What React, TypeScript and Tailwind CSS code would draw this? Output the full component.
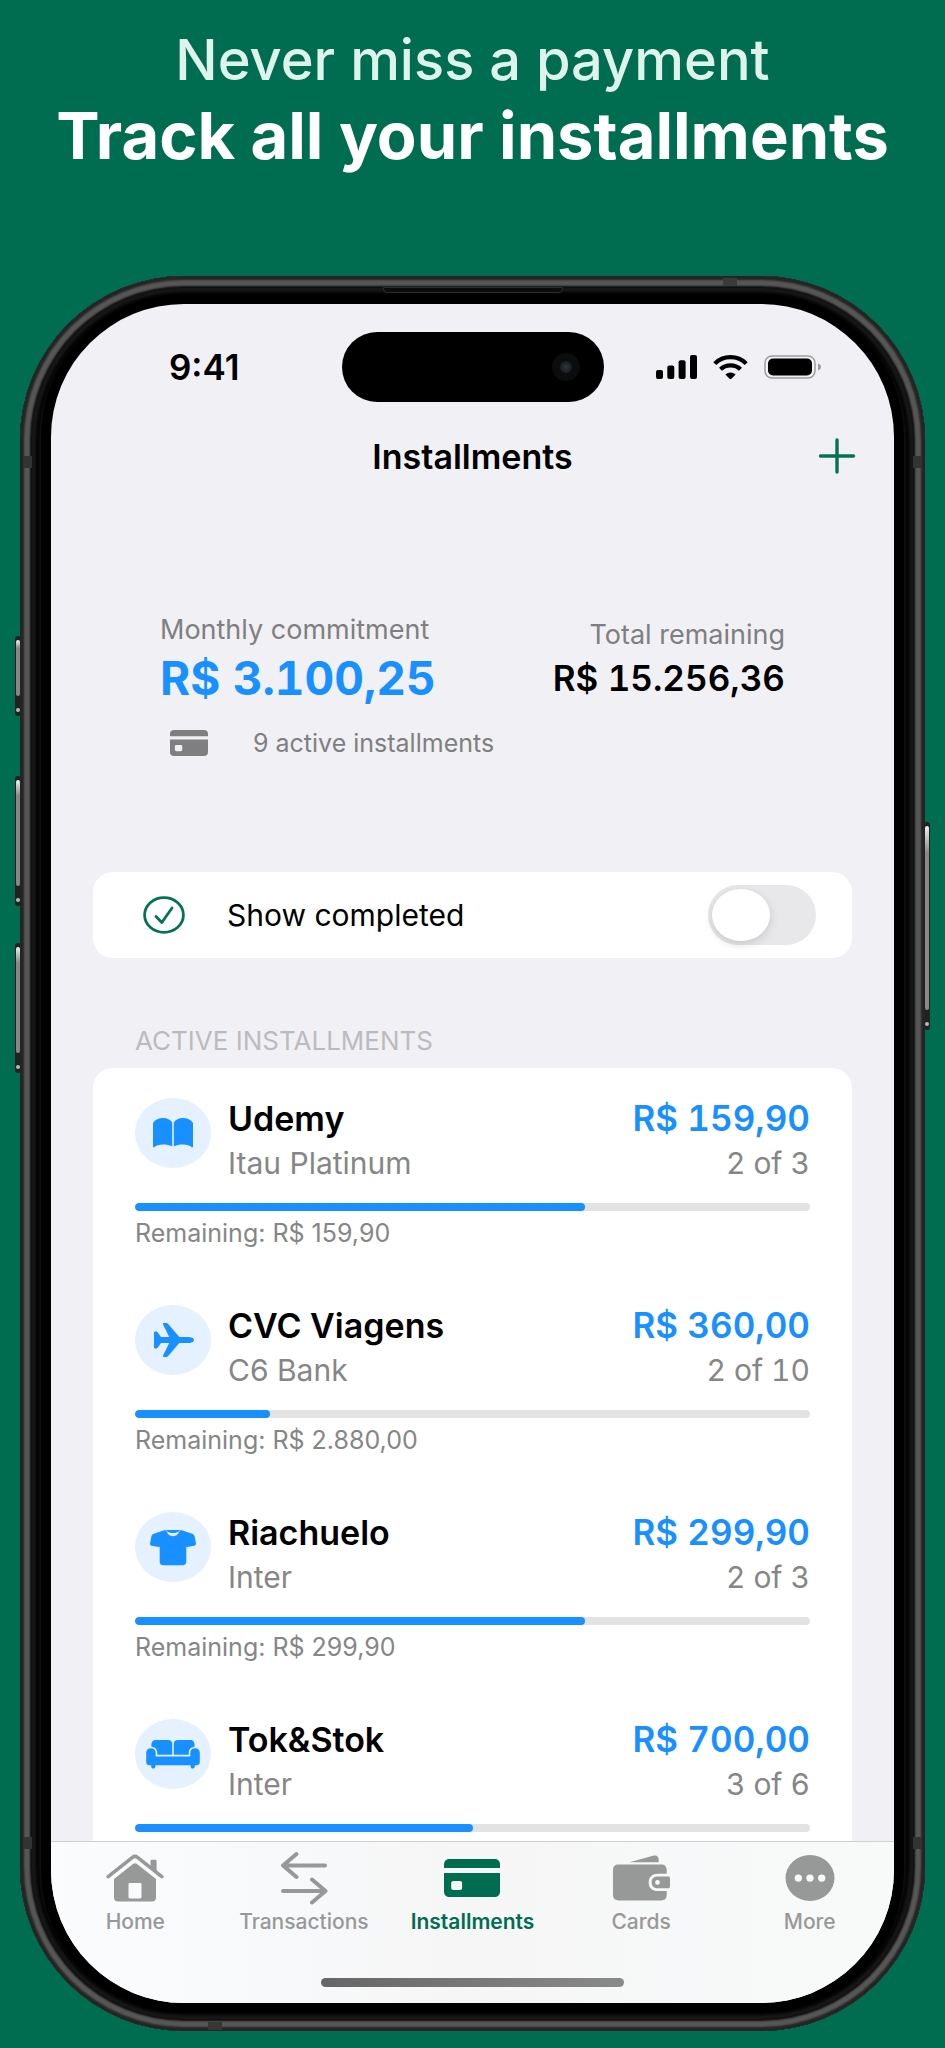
import { useState } from "react";
import type { ReactNode } from "react";

function BookIcon() {
  return (
    <svg viewBox="0 0 42 32" className="h-8 w-[42px]" fill="currentColor" aria-hidden="true">
      <path d="M1 6C3 2.600 7 1 11 1s7.500 1.600 9.200 4.400V29.600C17.800 28.200 14.500 27.600 11 27.600S4 28.800 2.200 30.200C1.600 30.700 1 30.400 1 29.600Z" />
      <path d="M41 6C39 2.600 35 1 31 1s-7.500 1.600-9.200 4.400V29.600C24.200 28.200 27.500 27.600 31 27.600S38 28.800 39.800 30.200C40.400 30.700 41 30.400 41 29.600Z" />
    </svg>
  );
}

function PlaneIcon() {
  return (
    <svg viewBox="0 0 40 34" className="ml-0.5 h-[34px] w-10" fill="currentColor" aria-hidden="true">
      <path d="M40 17c0 1.900-2.600 3.100-6.500 3.100h-8.200L14.200 32.900c-.6.700-1.200 1-2.100 1H9.900c-.8 0-1.200-.6-.8-1.300L15.200 20.100H7l-3.400 4.700c-.4.500-.8.700-1.400.7H.9c-.6 0-.9-.3-.9-.9V9.400c0-.6.3-.9.900-.9h1.300c.6 0 1 .2 1.400.7L7 13.900h8.200L9.100 1.400C8.700.7 9.100.1 9.900.1h2.200c.9 0 1.500.3 2.100 1l11.100 12.800h8.200c3.900 0 6.500 1.200 6.500 3.100Z" />
    </svg>
  );
}

function ShirtIcon() {
  return (
    <svg viewBox="0 0 46 37" className="h-[37px] w-[46px]" fill="currentColor" aria-hidden="true">
      <path d="M15 1 4.500 4.400C2.600 5 1.600 6 1.200 8L.1 14.200c-.2 1.300.4 2.200 1.600 2.500L8.800 18c.6.100.9-.2.900-.7V32.500C9.700 35 11 36.300 13.500 36.300h19c2.500 0 3.800-1.300 3.800-3.800V17.300c0 .5.300.8.900.7l7.100-1.300c1.200-.3 1.800-1.200 1.600-2.500L44.800 8c-.4-2-1.400-3-3.300-3.600L31 1c-1 .9-1.600 1.500-2.200 2.600C27.700 5.900 26 7.200 23 7.200s-4.700-1.300-5.800-3.600C16.600 2.500 16 1.900 15 1Z" />
      <path d="M15.400.9h15.200l-2.300 1.900c-1.500.9-3.200 1.300-5.300 1.300s-3.800-.4-5.300-1.300Z" />
    </svg>
  );
}

function SofaIcon() {
  return (
    <svg viewBox="0 0 54 30" className="h-[30px] w-[54px]" fill="currentColor" aria-hidden="true">
      <path d="M9.500 1H22c2.800 0 4.200 1.400 4.200 4v10.700H11.300V14c0-3.300-1.700-5.600-6-6.500C5.300 3.300 6.500 1 9.500 1Z" />
      <path d="M44.500 1H32c-2.800 0-4.200 1.400-4.200 4v10.700h14.900V14c0-3.300 1.700-5.600 6-6.500C48.700 3.300 47.500 1 44.500 1Z" />
      <path d="M5 9.200c2.900 0 4.700 1.800 4.700 4.700v3.500h34.600v-3.500c0-2.900 1.800-4.700 4.700-4.700s4.800 1.900 4.800 4.900V23c0 2.200-1.100 3.300-3.300 3.300H49l-.4 2c-.2.900-.8 1.300-1.900 1.300s-1.700-.4-1.900-1.300l-.4-2H9.600l-.4 2c-.2.900-.8 1.300-1.900 1.300s-1.700-.4-1.900-1.300l-.4-2H3.500C1.300 26.300.2 25.200.2 23v-8.900c0-3 1.900-4.900 4.800-4.900Z" />
    </svg>
  );
}

function HomeIcon() {
  return (
    <svg viewBox="0 0 58 48" className="h-12 w-[58px]" aria-hidden="true">
      <path
        d="M2.200 22.600 26.500 3.300c1.800-1.400 3.200-1.400 5 0L55.800 22.600"
        fill="none"
        stroke="currentColor"
        strokeWidth="3.600"
        strokeLinecap="round"
      />
      <path d="M44.500 7.500c0-1.200.6-1.800 1.800-1.800h2.500c1.200 0 1.800.6 1.800 1.800v9.700l-6.100-4.900Z" fill="currentColor" />
      <path
        fillRule="evenodd"
        d="M27.300 9.800c1.200-.9 2.200-.9 3.400 0L50 25v18.500c0 2.700-1.400 4-4.200 4H12.200c-2.800 0-4.200-1.300-4.200-4V25ZM24 29c-1 0-1.500.5-1.500 1.400V43c0 .9.500 1.400 1.500 1.400h10c1 0 1.500-.5 1.500-1.400V30.400c0-.9-.5-1.400-1.500-1.400Z"
        fill="currentColor"
      />
    </svg>
  );
}

function TransactionsIcon() {
  return (
    <svg
      viewBox="0 0 48 54"
      className="h-[54px] w-12"
      fill="none"
      stroke="currentColor"
      strokeWidth="4"
      strokeLinecap="round"
      strokeLinejoin="round"
      aria-hidden="true"
    >
      <path d="M45 14.500H3.500M16.500 3 3 14.500 16.500 26M3 40h41.500M32 28.500 45.500 40 32 51.500" />
    </svg>
  );
}

function CardIcon({ className }: { className: string }) {
  return (
    <svg viewBox="0 0 56 38" preserveAspectRatio="none" className={className} fill="currentColor" aria-hidden="true">
      <path d="M6 0h44c4 0 6 2 6 5.500V9H0V5.500C0 2 2 0 6 0Z" />
      <path
        fillRule="evenodd"
        d="M0 14h56v18.500c0 3.500-2 5.500-6 5.500H6c-4 0-6-2-6-5.500ZM9.500 22C8 22 7.200 22.800 7.200 24v5c0 1.300.8 2 2.300 2h6.300c1.500 0 2.300-.7 2.300-2v-5c0-1.200-.8-2-2.300-2Z"
      />
    </svg>
  );
}

function WalletIcon() {
  return (
    <svg viewBox="0 0 57 46" className="h-[46px] w-[57px]" fill="currentColor" aria-hidden="true">
      <path d="M16.500 7.200 40 .8c3.600-1 5.500.5 5.700 4.200v2.200Z" />
      <path d="M5.500 9.400H48c3.800 0 5.700 2 5.700 5.600v3.700H45c-5.800 0-9.300 3.200-9.300 8.700s3.500 8.600 9.300 8.600h8.700v3.800c0 3.700-1.900 5.700-5.700 5.700H6c-3.900 0-6-2-6-5.700V15c0-3.700 1.900-5.600 5.500-5.600Z" />
      <path
        fillRule="evenodd"
        d="M45.300 21.600H55c1.400 0 2 .6 2 1.800v8c0 1.200-.6 1.800-2 1.800h-9.700c-4.300 0-6.700-2-6.700-5.800s2.400-5.800 6.700-5.800Zm-.8 3.500a2.400 2.300 0 1 0 0 4.600 2.400 2.300 0 1 0 0-4.600Z"
      />
    </svg>
  );
}

function MoreIcon() {
  return (
    <svg viewBox="0 0 50 46" className="h-[46px] w-[50px]" fill="currentColor" aria-hidden="true">
      <path
        fillRule="evenodd"
        d="M25 0a24.500 23 0 1 0 0 46 24.500 23 0 1 0 0-46ZM13.300 19.500a3.700 3.600 0 1 1 0 7.200 3.700 3.600 0 1 1 0-7.200Zm11.700 0a3.700 3.600 0 1 1 0 7.200 3.700 3.600 0 1 1 0-7.200Zm11.700 0a3.700 3.600 0 1 1 0 7.200 3.700 3.600 0 1 1 0-7.200Z"
      />
    </svg>
  );
}

function StatusIcons() {
  return (
    <div className="flex items-center gap-4 text-black">
      <svg viewBox="0 0 41 24" className="h-6 w-[41px]" fill="currentColor" aria-hidden="true">
        <rect x="0" y="15" width="7" height="9" rx="2" />
        <rect x="11.300" y="10.500" width="7" height="13.500" rx="2" />
        <rect x="22.600" y="5.300" width="7" height="18.700" rx="2" />
        <rect x="34" y="0" width="7" height="24" rx="2" />
      </svg>
      <svg viewBox="0 0 35 24" className="h-6 w-[35px]" fill="none" stroke="currentColor" strokeWidth="4.200" aria-hidden="true">
        <path d="M1.800 8.600C6 4.300 11.400 2.200 17.500 2.200S29 4.300 33.200 8.600" />
        <path d="M7.500 14.300c2.700-2.700 6.100-4 10-4s7.300 1.300 10 4" />
        <path d="M17.500 24c-.4 0-.8-.2-1.200-.6l-3.900-4c1.400-1.300 3.100-2 5.100-2s3.700.7 5.100 2l-3.900 4c-.4.400-.8.600-1.200.6Z" fill="currentColor" stroke="none" />
      </svg>
      <svg viewBox="0 0 58 24" className="h-6 w-[58px]" aria-hidden="true">
        <rect x="1" y="1" width="50" height="22" rx="7" fill="none" stroke="#9d9da0" strokeWidth="1.500" />
        <rect x="4" y="3.500" width="44" height="17" rx="5" fill="currentColor" />
        <path d="M54 8.500c2 .7 3 1.900 3 3.500s-1 2.800-3 3.500Z" fill="#9d9da0" />
      </svg>
    </div>
  );
}

type Installment = {
  name: string;
  account: string;
  amount: string;
  paid: number;
  total: number;
  remaining?: string;
  icon: ReactNode;
};

const installments: Installment[] = [
  { name: "Udemy", account: "Itau Platinum", amount: "R$ 159,90", paid: 2, total: 3, remaining: "R$ 159,90", icon: <BookIcon /> },
  { name: "CVC Viagens", account: "C6 Bank", amount: "R$ 360,00", paid: 2, total: 10, remaining: "R$ 2.880,00", icon: <PlaneIcon /> },
  { name: "Riachuelo", account: "Inter", amount: "R$ 299,90", paid: 2, total: 3, remaining: "R$ 299,90", icon: <ShirtIcon /> },
  { name: "Tok&Stok", account: "Inter", amount: "R$ 700,00", paid: 3, total: 6, icon: <SofaIcon /> },
];

function InstallmentRow({ item }: { item: Installment }) {
  return (
    <li className="flex flex-col">
      <div className="flex items-start">
        <div className="mt-0.5 flex h-[70px] w-[76px] shrink-0 items-center justify-center rounded-[50%] bg-[#e5f1fe] text-[#1990ff]">
          {item.icon}
        </div>
        <div className="ml-[17px] min-w-0 flex-1 leading-[45px]">
          <h3 className="text-[34px] font-semibold text-black">{item.name}</h3>
          <p className="text-[30px] text-[#868686]">{item.account}</p>
        </div>
        <div className="text-right leading-[45px] tabular-nums">
          <p className="text-[35px] font-semibold text-[#1990ff]">{item.amount}</p>
          <p className="text-[30px] text-[#868686]">
            {item.paid} of {item.total}
          </p>
        </div>
      </div>
      <div
        role="progressbar"
        aria-label={item.name}
        aria-valuenow={item.paid}
        aria-valuemax={item.total}
        className="mt-[17px] h-2 overflow-hidden rounded-full bg-[#e3e3e4]"
      >
        <div className="h-full rounded-full bg-[#1990ff]" style={{ width: `${(item.paid / item.total) * 100}%` }} />
      </div>
      {item.remaining && <p className="mt-1.5 mb-[54px] text-[25px] leading-8 text-[#868686]">Remaining: {item.remaining}</p>}
    </li>
  );
}

const tabs: { label: string; icon: ReactNode }[] = [
  { label: "Home", icon: <HomeIcon /> },
  { label: "Transactions", icon: <TransactionsIcon /> },
  { label: "Installments", icon: <CardIcon className="h-[38px] w-14" /> },
  { label: "Cards", icon: <WalletIcon /> },
  { label: "More", icon: <MoreIcon /> },
];

function SideButton({ className }: { className: string }) {
  return (
    <div className={`absolute flex w-1.5 flex-col justify-between rounded-sm bg-[#202222] py-1 ${className}`}>
      <div className="mx-px mb-3 flex-1 rounded-full bg-linear-to-b from-[#f2f2f2] via-[#8a8686] via-15% to-[#8a8686]" />
      <div className="mx-px h-1 rounded-full bg-[#b9b9b9]" />
    </div>
  );
}

export default function App() {
  const [active, setActive] = useState("Installments");
  const [showCompleted, setShowCompleted] = useState(false);

  return (
    <div className="flex min-h-screen flex-col bg-[#006d50] px-5 pt-5 pb-[17px] font-['Inter','Liberation_Sans',sans-serif]">
      <header className="text-center">
        <p className="text-[56px] leading-[80px] font-medium text-[#def3ec]">Never miss a payment</p>
        <h1 className="text-[65px] leading-[72px] font-bold text-white">Track all your installments</h1>
      </header>

      <div className="relative mt-[104px]">
        <SideButton className="top-[360px] -left-[5px] h-20" />
        <SideButton className="top-[500px] -left-[5px] h-[130px]" />
        <SideButton className="top-[667px] -left-[5px] h-[130px]" />
        <SideButton className="top-[546px] -right-[5px] h-[208px]" />

        <div className="relative rounded-[164px] bg-[#1b1b1b] px-[31px] py-7 shadow-[inset_0_0_2px_4px_#242424,inset_0_0_2px_10px_#575757,inset_0_0_1px_12px_#0d0d0d,inset_0_0_3px_16px_#181818,inset_0_0_4px_20px_#000]">
          <div className="absolute top-[11px] left-1/2 h-1.5 w-[180px] -translate-x-1/2 rounded-b-sm border border-[#2c2c2c] bg-[#0c0c0c]" />
          <div className="absolute top-0.5 right-[188px] h-2 w-3.5 bg-[#3a3a3a]" />
          <div className="absolute bottom-px left-[188px] h-2 w-3.5 bg-[#3a3434]" />
          <div className="absolute top-[180px] left-1 h-3 w-2 bg-[#333]" />
          <div className="absolute top-[180px] right-1 h-3 w-2 bg-[#333]" />
          <div className="absolute bottom-[182px] left-1 h-3 w-2 bg-[#333]" />
          <div className="absolute right-1 bottom-[182px] h-3 w-2 bg-[#333]" />

          <div className="overflow-hidden rounded-[133px] bg-[#f1f1f5] shadow-[0_0_0_10px_#000]">
            <div className="grid grid-cols-[1fr_262px_1fr] items-center pt-7">
              <div className="pl-4 text-center text-[35px] font-semibold text-black">9:41</div>
              <div className="flex h-[70px] items-center justify-end rounded-[35px] bg-black pr-6">
                <div className="flex size-7 items-center justify-center rounded-full bg-[#0b0c0d]">
                  <div className="size-3 rounded-full bg-radial from-[#2a3a3a] to-[#101214]" />
                </div>
              </div>
              <div className="flex justify-end pr-[72px]">
                <StatusIcons />
              </div>
            </div>

            <div className="grid h-[108px] grid-cols-[1fr_auto_1fr] items-center px-[38px]">
              <h2 className="col-start-2 text-[34px] font-semibold text-black">Installments</h2>
              <button type="button" aria-label="Add installment" className="justify-self-end text-[#047253]">
                <svg viewBox="0 0 38 36" className="h-9 w-[38px]" stroke="currentColor" strokeWidth="3.400" strokeLinecap="round" aria-hidden="true">
                  <path d="M19 2v32M2.500 18h33" />
                </svg>
              </button>
            </div>

            <section className="px-[109px] pt-[102px] pb-[111px] text-[#7f7f80]">
              <div className="flex items-center justify-between">
                <div>
                  <p className="text-[27px] leading-9">Monthly commitment</p>
                  <p className="text-[46px] leading-[60px] font-bold text-[#1990ff] tabular-nums">R$ 3.100,25</p>
                </div>
                <div className="text-right">
                  <p className="text-[27px] leading-9">Total remaining</p>
                  <p className="text-[35px] leading-[50px] font-semibold text-black tabular-nums">R$ 15.256,36</p>
                </div>
              </div>
              <div className="mt-[17px] flex items-center gap-[45px] pl-2.5">
                <CardIcon className="h-[26px] w-[38px]" />
                <p className="text-[25px] leading-9">9 active installments</p>
              </div>
            </section>

            <div className="mx-[42px]">
              <label className="flex h-[86px] items-center rounded-[20px] bg-white pr-9 pl-[50px]">
                <svg viewBox="0 0 42 38" className="h-[38px] w-[42px]" fill="none" stroke="#047253" strokeWidth="2.800" strokeLinecap="round" strokeLinejoin="round" aria-hidden="true">
                  <ellipse cx="21" cy="19" rx="19.400" ry="17.400" />
                  <path d="m13 20.500 5.800 6L29 12" />
                </svg>
                <span className="ml-[42px] flex-1 text-[30px] text-black">Show completed</span>
                <input
                  type="checkbox"
                  role="switch"
                  checked={showCompleted}
                  onChange={(e) => setShowCompleted(e.target.checked)}
                  className="h-[60px] w-[108px] appearance-none rounded-full bg-[#e8e8ea] p-1 before:block before:h-[52px] before:w-[58px] before:rounded-[50%] before:bg-white before:shadow-[0_3px_10px_rgba(0,0,0,0.14)] before:transition-transform checked:bg-[#047253] checked:before:translate-x-[42px]"
                />
              </label>

              <h2 className="mt-[63px] mb-[7px] pl-[42px] text-[26px] leading-10 text-[#bbbbbf]">ACTIVE INSTALLMENTS</h2>
              <ul className="rounded-t-[20px] bg-white px-[42px] pt-7 pb-[9px]">
                {installments.map((item) => (
                  <InstallmentRow key={item.name} item={item} />
                ))}
              </ul>
            </div>

            <nav className="border-t border-[#cfcfd1] bg-linear-to-r from-[#fafcfd] via-[#f6f6f7] to-[#f8fafa] pt-2 pb-4">
              <div className="grid grid-cols-5">
                {tabs.map(({ label, icon }) => (
                  <button
                    key={label}
                    type="button"
                    onClick={() => setActive(label)}
                    className={`flex flex-col items-center text-[21px] leading-8 ${
                      active === label ? "font-semibold text-[#006d50]" : "font-medium text-[#979998]"
                    }`}
                  >
                    <span className="flex h-14 items-center justify-center">{icon}</span>
                    {label}
                  </button>
                ))}
              </div>
              <div className="mx-auto mt-[40px] h-[9px] w-[303px] rounded-full bg-linear-to-r from-[#666] via-[#787878] to-[#8a8a8a]" />
            </nav>
          </div>
        </div>
      </div>
    </div>
  );
}
